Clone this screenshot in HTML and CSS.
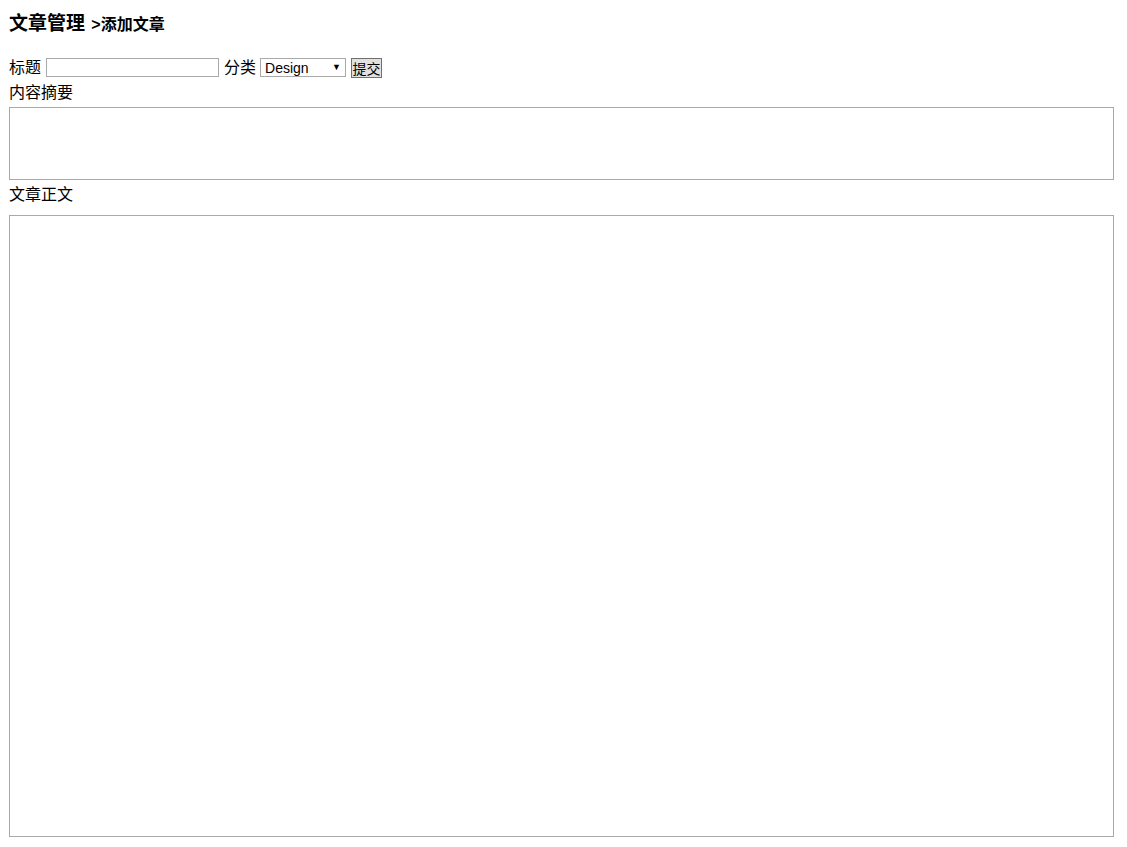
FILE: index.html
```html
<!DOCTYPE html>
<html lang="zh-CN">
<head>
  <meta charset="UTF-8">
  <title>添加文章</title>
  <link rel="stylesheet" href="styles.css">
</head>
<body>

<h3 class="title">文章管理 <span class="sub">&gt;添加文章</span></h3>

<form class="article-form">
  <div class="row">
    <label>标题</label>
    <input type="text" class="title-input">
    <label>分类</label>
    <span class="select-wrap">
      <select class="cate">
        <option>Design</option>
      </select>
    </span>
    <button type="button" class="submit">提交</button>
  </div>
  <p class="label">内容摘要</p>
  <textarea class="summary"></textarea>
  <p class="label label-body">文章正文</p>
  <textarea class="content"></textarea>
</form>

</body>
</html>
```

FILE: styles.css
```css
body {
  margin: 0;
  padding: 0 13px 0 9px;
  font-family: "Liberation Sans", "Noto Sans CJK SC", sans-serif;
  font-size: 16px;
  color: #000;
  background: #fff;
}
.title {
  margin: 0;
  padding-top: 10px;
  height: 28px;
  line-height: 28px;
  font-size: 19px;
  font-weight: bold;
}
.title .sub {
  font-size: 16px;
  margin-left: 1px;
}
.article-form {
  margin-top: 19px;
}
.row {
  display: flex;
  align-items: center;
  height: 21px;
}
.row label {
  line-height: 21px;
}
.title-input {
  box-sizing: border-box;
  width: 173px;
  height: 19px;
  margin: 0 5px 0 5px;
  padding: 1px 2px;
  border: 1px solid #a9a9a9;
  font-size: 13px;
}
.select-wrap {
  position: relative;
  margin: 0 5px 0 4px;
  height: 19px;
}
.select-wrap::after {
  content: "▼";
  position: absolute;
  right: 5px;
  top: 4px;
  font-size: 9px;
  line-height: 11px;
  pointer-events: none;
}
.cate {
  box-sizing: border-box;
  width: 86px;
  height: 19px;
  margin: 0;
  padding: 0 4px;
  border: 1px solid #a9a9a9;
  border-radius: 0;
  background: #fff;
  appearance: none;
  -webkit-appearance: none;
  font-family: "Liberation Sans", sans-serif;
  font-size: 14px;
  color: #000;
}
.submit {
  box-sizing: border-box;
  display: flex;
  align-items: center;
  justify-content: center;
  height: 20px;
  width: 31px;
  padding: 0;
  border: 1px solid #707070;
  background: #e1e1e1;
  font-family: "Noto Sans CJK SC", sans-serif;
  font-size: 14px;
  line-height: 16px;
}
.label {
  margin: 4px 0 3px;
  line-height: 22px;
  height: 22px;
}
.label-body {
  margin-bottom: 9px;
}
textarea {
  display: block;
  box-sizing: border-box;
  width: 100%;
  margin: 0;
  border: 1px solid #a9a9a9;
  resize: none;
}
.summary {
  height: 73px;
}
.content {
  height: 622px;
}
```
